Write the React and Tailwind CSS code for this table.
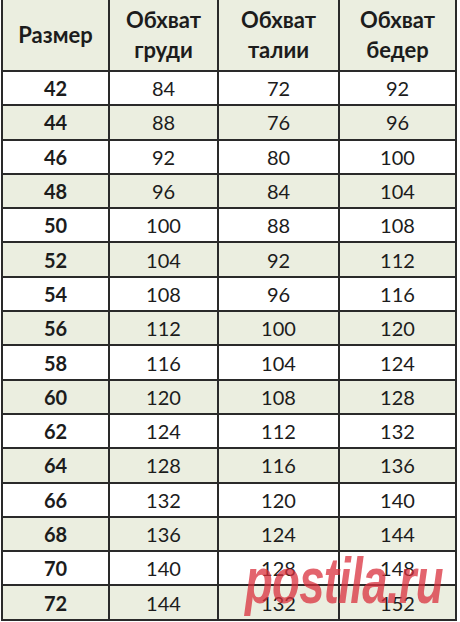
const rows = [
  [42, 84, 72, 92],
  [44, 88, 76, 96],
  [46, 92, 80, 100],
  [48, 96, 84, 104],
  [50, 100, 88, 108],
  [52, 104, 92, 112],
  [54, 108, 96, 116],
  [56, 112, 100, 120],
  [58, 116, 104, 124],
  [60, 120, 108, 128],
  [62, 124, 112, 132],
  [64, 128, 116, 136],
  [66, 132, 120, 140],
  [68, 136, 124, 144],
  [70, 140, 128, 148],
  [72, 144, 132, 152],
]

const cols = 'grid grid-cols-[107px_109px_121px_117px]'
const cell = 'flex items-center justify-center border-r-2 border-b-2 border-[#2a2a2a]'

export default function App() {
  return (
    <div className="relative w-[460px] h-[622px] overflow-hidden bg-white text-[#1c1c1c] font-['Lato','Noto_Sans',sans-serif]">
      <div className="ml-px border-l-2 border-[#2a2a2a] w-fit">
        {/* header */}
        <div className={`${cols} h-[72px] bg-[#ebeee0] font-bold text-[22px] leading-[30px]`}>
          <div className={cell}>Размер</div>
          <div className={`${cell} flex-col`}><span>Обхват</span><span>груди</span></div>
          <div className={`${cell} flex-col`}><span>Обхват</span><span>талии</span></div>
          <div className={`${cell} flex-col`}><span>Обхват</span><span>бедер</span></div>
        </div>

        {rows.map((r, i) => (
          <div
            key={r[0]}
            className={`${cols} h-[34.3px] text-[20px] ${i % 2 ? 'bg-[#ebeee0]' : 'bg-white'}`}
          >
            <div className={`${cell} font-bold`}>{r[0]}</div>
            <div className={cell}>{r[1]}</div>
            <div className={cell}>{r[2]}</div>
            <div className={cell}>{r[3]}</div>
          </div>
        ))}
      </div>

      {/* watermark */}
      <div className="absolute left-[245px] top-[548px] origin-left scale-x-[0.7] text-[65px] font-bold italic tracking-[-1px] text-[#d9303e]/75 font-['Liberation_Sans',sans-serif] leading-none pointer-events-none whitespace-nowrap">
        postila.ru
      </div>
    </div>
  )
}
